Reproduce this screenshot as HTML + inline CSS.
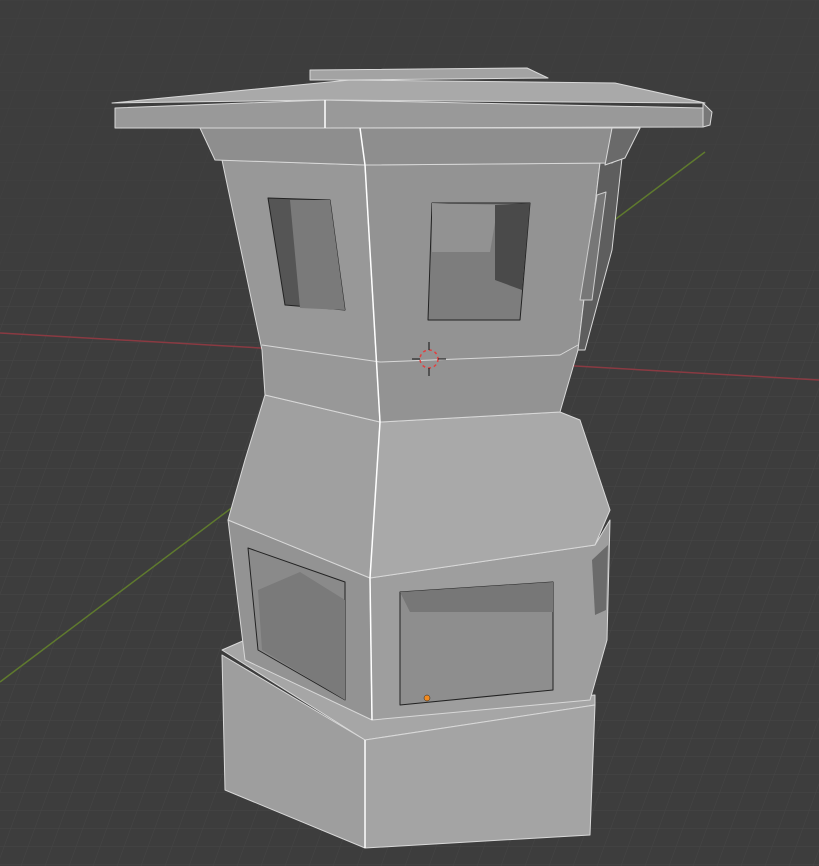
<!DOCTYPE html>
<html><head><style>html,body{margin:0;padding:0;background:#3d3d3d;overflow:hidden}svg{display:block}</style></head>
<body>
<svg width="819" height="866" viewBox="0 0 819 866" xmlns="http://www.w3.org/2000/svg">
<defs>
<pattern id="g" width="24" height="18" patternUnits="userSpaceOnUse" patternTransform="skewX(-20)">
<path d="M0 0H24M0 0V18" stroke="#474747" stroke-width="1" fill="none"/>
</pattern>
</defs>
<rect width="819" height="866" fill="#3d3d3d"/>
<rect y="0" width="819" height="270" fill="url(#g)" opacity="0.4"/>
<rect y="270" width="819" height="596" fill="url(#g)" opacity="0.9"/>
<line x1="0" y1="333" x2="819" y2="380" stroke="#8a3a42" stroke-width="1.5"/>
<line x1="0" y1="682" x2="705" y2="152" stroke="#5f7a2e" stroke-width="1.5"/>
<g stroke="#d8d8d8" stroke-width="1" stroke-linejoin="round">
<polygon points="222,650 245,640 372,712 595,695 595,705 365,740" fill="#a6a6a6"/>
<polygon points="222,655 365,740 365,848 225,790" fill="#9e9e9e"/>
<polygon points="365,740 595,705 590,835 365,848" fill="#a4a4a4"/>
<polygon points="228,520 370,578 372,720 245,660" fill="#939393"/>
<polygon points="370,578 595,545 610,520 607,640 590,700 372,720" fill="#9e9e9e"/>
<polygon points="248,548 345,582 345,700 258,650" fill="#8a8a8a" stroke="#222"/>
<polygon points="258,590 300,572 345,600 345,700 262,650" fill="#7a7a7a" stroke="none"/>
<polygon points="400,592 553,582 553,690 400,705" fill="#8e8e8e" stroke="#222"/>
<polygon points="400,592 553,582 553,612 410,612" fill="#777" stroke="none"/>
<polygon points="592,560 608,545 606,610 595,615" fill="#6b6b6b" stroke="none"/>
<polygon points="265,395 380,422 370,578 228,520 245,460" fill="#a0a0a0"/>
<polygon points="380,422 560,412 580,420 610,510 595,545 370,578" fill="#a9a9a9"/>
<polygon points="222,160 365,165 380,422 265,395 262,350" fill="#989898"/>
<polygon points="365,165 600,163 578,350 560,412 380,422" fill="#939393"/>
<polygon points="600,163 622,158 612,250 585,350 578,350" fill="#5e5e5e"/>
<polyline points="262,345 380,362 560,355 578,345" fill="none"/>
<polygon points="268,198 330,200 345,310 285,305" fill="#555" stroke="#222"/>
<polygon points="290,200 330,200 345,310 300,308" fill="#7a7a7a" stroke="none"/>
<polygon points="432,203 530,203 520,320 428,320" fill="#7d7d7d" stroke="#222"/>
<polygon points="432,203 498,205 490,252 432,252" fill="#929292" stroke="none"/>
<polygon points="495,205 530,203 522,290 495,280" fill="#4a4a4a" stroke="none"/>
<polygon points="597,195 606,192 592,300 580,300" fill="#777" stroke="#ccc"/>
<polygon points="200,128 640,128 625,155 612,163 365,165 215,160" fill="#8e8e8e"/>
<polygon points="612,128 640,128 625,158 605,165" fill="#6a6a6a"/>
<polygon points="115,108 325,100 703,108 703,127 325,128 115,128" fill="#999"/>
<polygon points="112,103 350,80 615,83 705,103 325,100" fill="#a9a9a9"/>
<polygon points="703,103 712,112 710,125 703,127" fill="#777"/>
<polygon points="310,70 527,68 548,78 350,80 310,80" fill="#a3a3a3"/>
</g>
<g stroke="#ffffff" stroke-width="1.5" fill="none">
<line x1="325" y1="100" x2="325" y2="128"/>
<line x1="360" y1="128" x2="365" y2="165"/>
<line x1="365" y1="165" x2="380" y2="422"/>
<line x1="380" y1="422" x2="370" y2="578"/>
<line x1="370" y1="578" x2="372" y2="720"/>
<line x1="365" y1="740" x2="365" y2="848"/>
</g>
<circle cx="429" cy="359" r="9" fill="none" stroke="#e04040" stroke-width="1.5" stroke-dasharray="3 3"/>
<path d="M412 359h8M438 359h8M429 342v8M429 368v8" stroke="#111" stroke-width="1"/>
<circle cx="427" cy="698" r="3" fill="#f08a20" stroke="#222" stroke-width="0.5"/>
</svg>
</body></html>
